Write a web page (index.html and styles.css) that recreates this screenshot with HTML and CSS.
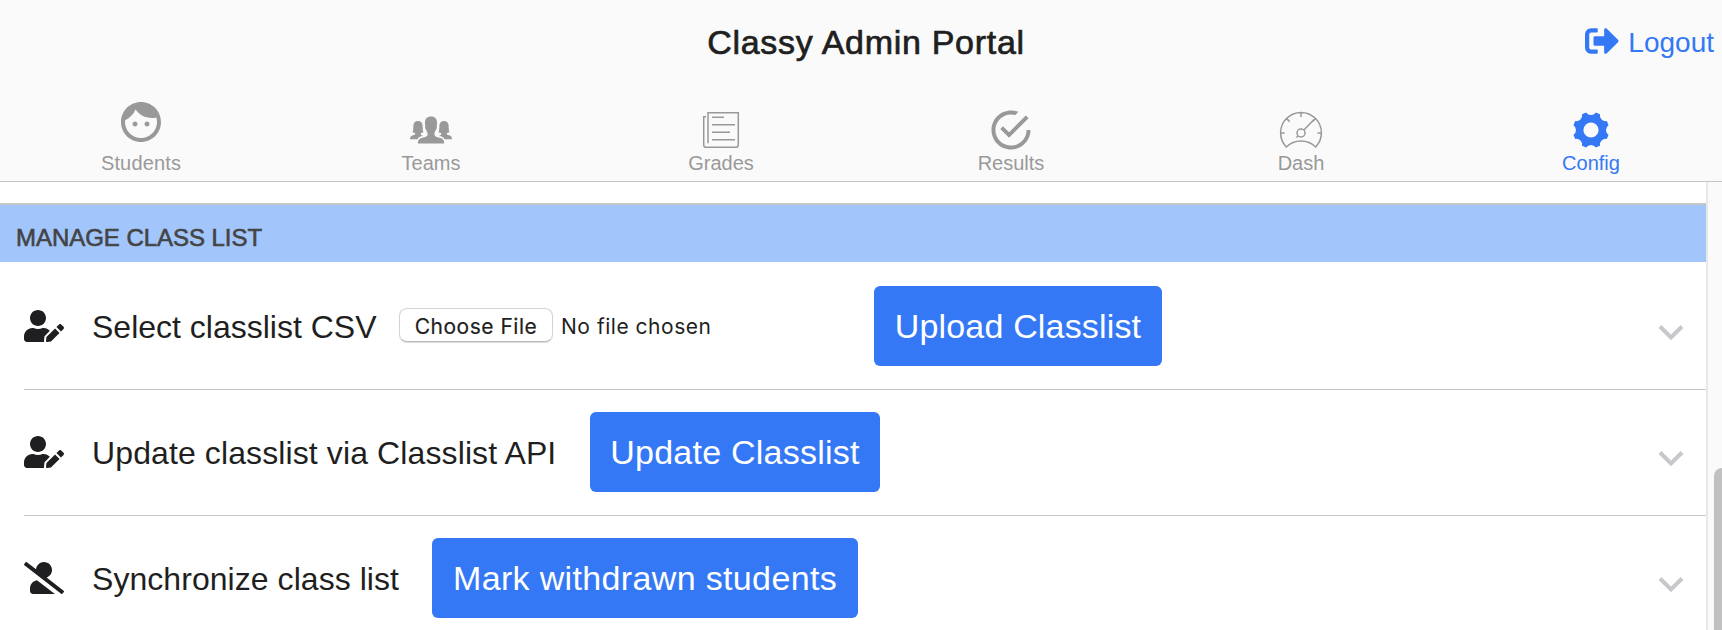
FILE: index.html
```
<!DOCTYPE html>
<html lang="en">
<head>
<meta charset="utf-8">
<title>Classy Admin Portal</title>
<link rel="stylesheet" href="styles.css">
</head>
<body>
<svg class="sprite" aria-hidden="true">
  <symbol id="user-edit" viewBox="0 0 640 512"><path d="M224 256c70.7 0 128-57.3 128-128S294.7 0 224 0 96 57.3 96 128s57.3 128 128 128zm89.6 32h-16.7c-22.2 10.2-46.9 16-72.9 16s-50.6-5.8-72.9-16h-16.7C60.2 288 0 348.2 0 422.4V464c0 26.5 21.5 48 48 48h274.9c-2.4-6.8-3.4-14-2.6-21.3l6.8-60.9 1.2-11.1 7.9-7.9 77.3-77.3c-24.5-27.7-60-45.5-99.9-45.5zm45.3 145.3l-6.8 61c-1.1 10.2 7.5 18.8 17.6 17.6l60.9-6.8 137.9-137.9-71.7-71.7-137.9 137.8zM633 268.9L595.1 231c-9.3-9.3-24.5-9.3-33.8 0l-37.8 37.8-4.1 4.1 71.8 71.7 41.8-41.8c9.3-9.4 9.3-24.5 0-33.9z"/></symbol>
  <symbol id="chevron" viewBox="0 0 26 18"><path d="M2 2.5 13 13.5 24 2.5" fill="none" stroke="currentColor" stroke-width="4"/></symbol>
</svg>
<header class="toolbar">
  <h1 class="title">Classy Admin Portal</h1>
  <a class="logout"><svg class="logout-icon" viewBox="0 0 512 512"><path d="M497 273L329 441c-15 15-41 4.5-41-17v-96H152c-13.3 0-24-10.7-24-24v-96c0-13.3 10.7-24 24-24h136V88c0-21.4 25.9-32 41-17l168 168c9.3 9.4 9.3 24.6 0 34zM192 436v-40c0-6.6-5.4-12-12-12H96c-17.7 0-32-14.3-32-32V160c0-17.7 14.3-32 32-32h84c6.6 0 12-5.4 12-12V76c0-6.6-5.4-12-12-12H96c-53 0-96 43-96 96v192c0 53 43 96 96 96h84c6.6 0 12-5.4 12-12z"/></svg><span class="logout-text">Logout</span></a>
</header>
<nav class="tabs">
  <div class="tab"><svg class="tab-icon raised" viewBox="0 0 24 24"><path d="M9 11.75c-.69 0-1.25.56-1.25 1.25s.56 1.25 1.25 1.25 1.25-.56 1.25-1.25-.56-1.25-1.25-1.25zm6 0c-.69 0-1.25.56-1.25 1.25s.56 1.25 1.25 1.25 1.25-.56 1.25-1.25-.56-1.25-1.25-1.25zM12 2C6.48 2 2 6.48 2 12s4.48 10 10 10 10-4.48 10-10S17.52 2 12 2zm0 18c-4.41 0-8-3.59-8-8 0-.29.02-.58.05-.86 2.36-1.05 4.23-2.98 5.21-5.37C11.07 8.33 14.05 10 17.42 10c.78 0 1.53-.09 2.25-.26.21.71.33 1.47.33 2.26 0 4.41-3.59 8-8 8z"/></svg><span class="tab-label students">Students</span></div>
  <div class="tab"><svg class="tab-icon" viewBox="0 0 48 48">
    <path d="M24 10.5c4 0 6.2 2.6 6 6.5 0 1.6-.1 2.6-.4 3.4.7.5.3 2.3-.6 3-.5 1.9-1.2 2.6-1.5 3.2v2.6c.5 1.600 3.500 1.900 6 2.900 2.700 1 3.700 2.400 3.700 5.500H10.800c0-3.100 1-4.500 3.700-5.500 2.500-1 5.500-1.300 6-2.900v-2.600c-.3-.6-1-1.300-1.500-3.200-.9-.7-1.300-2.500-.6-3-.3-.8-.4-1.800-.4-3.400-.2-3.900 2-6.500 6-6.500z"/>
    <path id="side" d="M11 15c2.900 0 4.500 1.800 4.600 4.600.1 2.600.1 4.800.8 6.600-.8.500-1.700.7-2.600.8v1.200c.3.900 1.200 1.200 2.100 1.600-2.600.7-4.600 1.800-5.500 3.400H3c.1-2.600 1-3.300 3-3.900 1.400-.4 2-.5 2.200-1.200V27c-1-.1-1.900-.3-2.600-.8.7-1.800.7-4 .8-6.600C6.500 16.800 8.100 15 11 15z"/>
    <use href="#side" transform="matrix(-1 0 0 1 48 0)"/></svg><span class="tab-label teams">Teams</span></div>
  <div class="tab"><svg class="tab-icon line" viewBox="0 0 48 48"><path d="M11 37.300V6.700h30.300v32c0 1.600-1 2.600-2.600 2.600H9.300c-1.600 0-2.600-1-2.600-2.600V10.700H9M15 11.200h12M15 18.700h23M15 26.200h18M15 33.700h23"/></svg><span class="tab-label grades">Grades</span></div>
  <div class="tab"><svg class="tab-icon" viewBox="0 0 512 512"><path d="M170.718 216.482L141.600 245.600l93.600 93.600 208-208-29.118-29.118L235.200 279.918l-64.482-63.436zM422.400 256c0 91.518-74.883 166.400-166.400 166.400S89.600 347.518 89.600 256 164.482 89.600 256 89.600c15.600 0 31.200 2.082 45.764 6.241L334 62.400C310.083 53.041 283.042 48 256 48 141.600 48 48 141.600 48 256s93.600 208 208 208 208-93.600 208-208h-41.600z"/></svg><span class="tab-label results">Results</span></div>
  <div class="tab"><svg class="tab-icon line" viewBox="0 0 48 48"><path d="M9.300 41A20.400 20.400 0 1 1 38.700 41C30.500 33 17.500 33 9.300 41zM24 6.500v4.600M3.600 27h4M40.400 27h4M9.600 12.600l3 3M38.400 12.600l-3 3M27 24 37 13.500M21 30l-1.500 1.500"/><circle cx="24" cy="27" r="4"/></svg><span class="tab-label dash">Dash</span></div>
  <div class="tab active"><svg class="tab-icon" viewBox="-24 -24 48 48"><path fill-rule="evenodd" d="M4.860-17.540L8.960-15.840A5.900 5.900 0 0 0 15.840-8.960L17.540-4.860A5.900 5.900 0 0 0 17.540 4.860L15.840 8.960A5.900 5.900 0 0 0 8.960 15.840L4.860 17.540A5.900 5.900 0 0 0-4.860 17.540L-8.960 15.840A5.900 5.900 0 0 0-15.840 8.960L-17.540 4.860A5.900 5.900 0 0 0-17.540-4.860L-15.840-8.960A5.900 5.900 0 0 0-8.960-15.840L-4.860-17.540A5.900 5.900 0 0 0 4.860-17.540zM-7.600 0a7.600 7.600 0 1 0 15.200 0a7.600 7.600 0 1 0-15.200 0z"/></svg><span class="tab-label config">Config</span></div>
</nav>
<div class="scroller">
  <main class="page">
    <h2 class="list-header"><span class="list-header-text">Manage Class List</span></h2>
    <div class="list">
      <div class="row">
        <svg class="row-icon"><use href="#user-edit"/></svg>
        <span class="row-label select">Select classlist CSV</span>
        <div class="file"><span class="file-button"><span class="choose">Choose File</span></span><span class="file-name">No file chosen</span></div>
        <button class="action upload">Upload Classlist</button>
        <svg class="chevron"><use href="#chevron"/></svg>
      </div>
      <div class="row">
        <svg class="row-icon"><use href="#user-edit"/></svg>
        <span class="row-label update-label">Update classlist via Classlist API</span>
        <button class="action update">Update Classlist</button>
        <svg class="chevron"><use href="#chevron"/></svg>
      </div>
      <div class="row">
        <svg class="row-icon" viewBox="0 0 640 512"><path d="M633.800 458.100L362.300 248.300C412.100 230.700 448 183.800 448 128 448 57.300 390.700 0 320 0c-67.100 0-121.500 51.800-126.900 117.400L45.500 3.400C38.500-2 28.500-.8 23 6.200L3.400 31.400c-5.400 7-4.200 17 2.800 22.400l588.400 454.700c7 5.500 17 4.200 22.500-2.800l19.600-25.300c5.400-6.800 4.100-16.900-2.900-22.300zM96 422.400V464c0 26.500 21.500 48 48 48h350.200L207.400 290.300C144.200 301.300 96 356 96 422.400z"/></svg>
        <span class="row-label sync">Synchronize class list</span>
        <button class="action mark">Mark withdrawn students</button>
        <svg class="chevron"><use href="#chevron"/></svg>
      </div>
    </div>
  </main>
  <div class="scrollbar"><div class="thumb"></div></div>
</div>
</body>
</html>
```
FILE: styles.css
```
* { box-sizing: border-box; }
body {
  margin: 0;
  height: 630px;
  overflow: hidden;
  display: flex;
  flex-direction: column;
  background: #fff;
  color: #1f1f21;
  font-family: "Liberation Sans", Arial, sans-serif;
  white-space: nowrap;
}
svg { display: block; flex: none; fill: currentColor; }
.sprite { width: 0; height: 0; position: absolute; }

.toolbar {
  flex: none;
  height: 88px;
  background: #fafafa;
  display: grid;
  grid-template-columns: 1fr auto 1fr;
  padding-right: 8px;
}
.title {
  grid-column: 2;
  margin: 0 -9px 0 9px;
  font-size: 34px;
  line-height: 84px;
  font-weight: 400;
  -webkit-text-stroke: 0.7px;
  letter-spacing: 0.7px;
}
.logout {
  grid-column: 3;
  justify-self: end;
  display: flex;
  gap: 9px;
  color: #3478f6;
  font-size: 28px;
  line-height: 86px;
}
.logout-icon { width: 34px; height: 34px; margin-top: 24px; }

.tabs {
  flex: none;
  height: 94px;
  overflow: hidden;
  display: flex;
  background: #fafafa;
  border-bottom: 1px solid #c4c4c4;
  color: #999;
}
.tab {
  flex: 0 0 290px;
  display: flex;
  flex-direction: column;
  align-items: center;
  padding-top: 18px;
}
.tab:first-child { flex-basis: 286px; padding-right: 4px; }
.tab-icon { width: 48px; height: 48px; }
.raised { margin: -8px 0 8px; }
.line { fill: none; stroke: currentColor; stroke-width: 1.5; }
.tab-label { font-size: 20px; line-height: 22px; margin-top: -2px; }
.students { letter-spacing: 0.15px; }
.active { color: #3478f6; }

.scroller { flex: 1; min-height: 0; display: flex; }
.page { flex: 1; padding-top: 21px; }
.list-header {
  margin: 0;
  height: 59px;
  border-top: 2px solid #c8c8c8;
  background: #a2c6fb;
  color: #444;
  padding-left: 16px;
  font-size: 24px;
  line-height: 65px;
  font-weight: 400;
  text-transform: uppercase;
  letter-spacing: -0.04px;
  -webkit-text-stroke: 0.6px;
}
.list { padding: 2px 0 0 24px; }
.row {
  height: 126px;
  display: flex;
  align-items: center;
  padding: 0 22px 1px 0;
  border-bottom: 1px solid #c8c7cc;
}
.row-icon { width: 40px; height: 32px; }
.row-label { margin: 2px 0 0 28px; font-size: 32px; line-height: 40px; }
.select { width: 307px; }
.update-label { width: 498px; letter-spacing: 0.11px; }
.sync { width: 340px; letter-spacing: 0.05px; }
.file {
  width: 475px;
  display: flex;
  align-items: center;
  gap: 8px;
  font: 21px/26px Inter, sans-serif;
  letter-spacing: 0.52px;
}
.file-button {
  width: 154px;
  height: 34px;
  margin-top: -2px;
  border: 1px solid #d4d4d4;
  border-bottom-color: #b8b8b8;
  border-radius: 8px;
  box-shadow: 0 1px 1px rgba(0, 0, 0, .15);
  text-align: center;
  line-height: 35px;
}
.file-name { padding-top: 1px; }
.choose { -webkit-text-stroke: 0.2px; }
.action {
  height: 80px;
  padding: 0;
  border: 0;
  border-radius: 6px;
  background: #3478f6;
  color: #fff;
  font: 34px/80px "Liberation Sans", Arial, sans-serif;
  text-align: center;
}
.upload { width: 288px; letter-spacing: 0.17px; }
.update { width: 290px; letter-spacing: 0.24px; }
.mark { width: 426px; letter-spacing: 0.35px; }
.chevron { width: 26px; height: 18px; margin: 13px 0 0 auto; color: #c7c7cc; }

.scrollbar {
  width: 16px;
  overflow: hidden;
  background: #fafafa;
  border-left: 2px solid #e8e8e8;
  padding: 286px 0 0 6px;
}
.thumb { width: 16px; height: 200px; border-radius: 8px; background: #c1c1c1; }
```
